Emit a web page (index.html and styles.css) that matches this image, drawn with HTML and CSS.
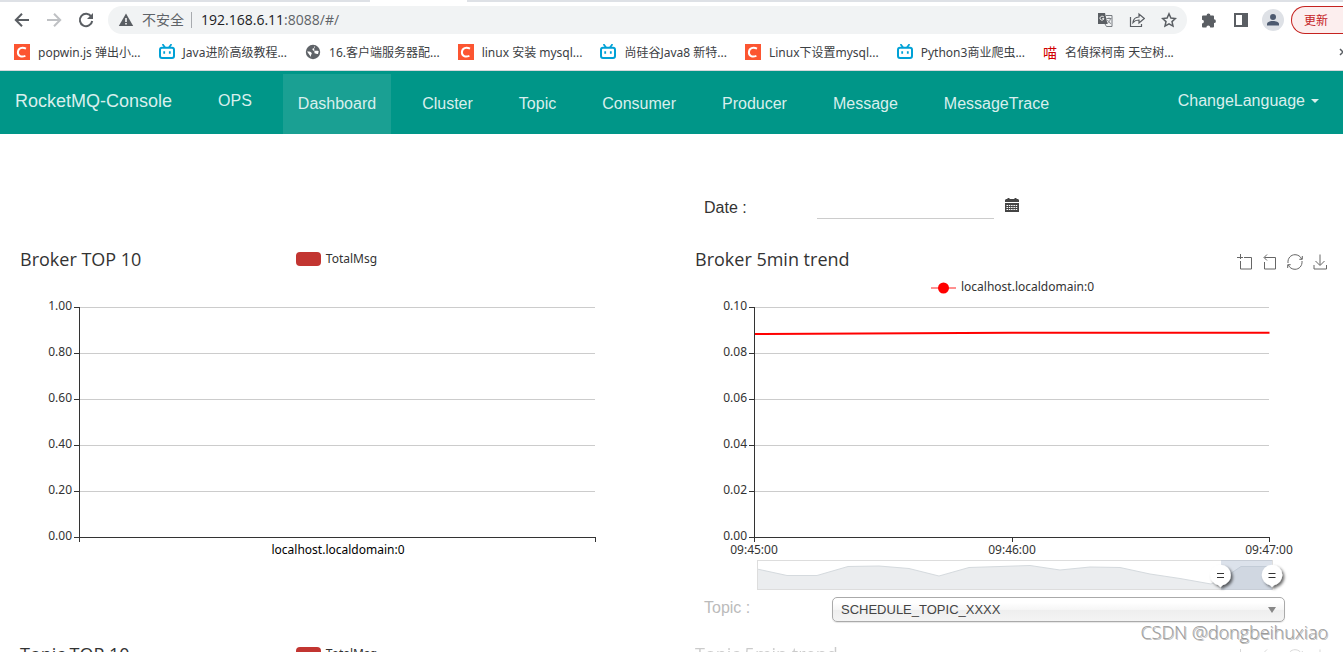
FILE: index.html
```html
<!DOCTYPE html>
<html lang="en">
<head>
<meta charset="utf-8">
<title>RocketMQ-Console</title>
<link rel="stylesheet" href="styles.css">
</head>
<body>
<svg class="defs" width="0" height="0" aria-hidden="true">
  <symbol id="i-csdn" viewBox="0 0 16 16"><rect width="16" height="16" fill="#fc5531"/><path d="M12 4.600C8 2.600 4.200 4 3.900 8.200c0 4 3.400 5.100 7.500 3.700" fill="none" stroke="#fff" stroke-width="2"/></symbol>
  <symbol id="i-tv" viewBox="0 0 16 16"><path d="M4 .8 6 3.500M12 .8 10 3.500" stroke="#00a1d6" stroke-width="1.800" stroke-linecap="round"/><rect x="1" y="3.800" width="14" height="10.200" rx="2" fill="#fff" stroke="#00a1d6" stroke-width="2"/><path d="M5.200 7.200v2.600M10.800 7.200v2.600" stroke="#00a1d6" stroke-width="1.800"/></symbol>
  <symbol id="i-globe" viewBox="0 0 16 16"><circle cx="8" cy="8" r="7.200" fill="#5f6368"/><path d="M9 2.300c1.500.5 1 1.800-.4 2-1.500.3-1.500 1.500-.5 2.200 1.400.8 3.600-.5 5.600.7L13 10c-1.500 0-2-.8-3.500-.8M2 7.500c2-.3 3.800.2 4.500 1.300.7 1-.2 1.700-.5 2.400-.3.800-.2 1.500.3 2.200z" fill="#fff"/></symbol>
  <symbol id="i-zoom" viewBox="0 0 16 16"><path d="M0 3.500h6M3.500 0v5M7 3.500h7.500V15h-11V7" fill="none" stroke="#666"/></symbol>
  <symbol id="i-back" viewBox="0 0 16 16"><path d="M2.500 8v7h11V3.500H2.500M5 .5l-3 3 3 3" fill="none" stroke="#666"/></symbol>
  <symbol id="i-refresh" viewBox="0 0 16 16"><path d="M1 9C.5 4 4 .7 8 .7c3 0 5.500 1.600 6.600 4.300M15 7c.5 5-3 8.300-7 8.300-3 0-5.500-1.600-6.600-4.300M15.300 2v3.300h-3M.7 14v-3.300h3" fill="none" stroke="#666"/></symbol>
  <symbol id="i-save" viewBox="0 0 16 16"><path d="M8 .5v10.500M3.500 7 8 11.500l4.500-4.500M2 11v4h12.500v-4" fill="none" stroke="#666"/></symbol>
</svg>

<div class="browser">
  <div class="tabstrip"><span class="tab-edge"></span></div>
  <div class="toolbar">
    <button class="tool" aria-label="Back"><svg width="16" height="16" viewBox="0 0 16 16"><path d="M15 8H2M8 1.800 1.800 8 8 14.200" fill="none" stroke="#5a5e63" stroke-width="2"/></svg></button>
    <button class="tool" aria-label="Forward"><svg width="16" height="16" viewBox="0 0 16 16"><path d="M1 8h13M8 1.800 14.200 8 8 14.200" fill="none" stroke="#bfc1c4" stroke-width="2"/></svg></button>
    <button class="tool" aria-label="Reload"><svg width="16" height="16" viewBox="0 0 16 16"><path d="M13.300 4.600A6.200 6.200 0 1 0 14.200 9" fill="none" stroke="#5a5e63" stroke-width="2"/><path d="M15 1v6H9z" fill="#5a5e63"/></svg></button>
    <div class="omnibox">
      <svg width="16" height="16" viewBox="0 0 16 16"><path d="M8 1.500 15.200 14H.8z" fill="#5a5e63"/><path d="M8 6v4M8 11v1.600" stroke="#fff" stroke-width="1.500"/></svg>
      <span class="insecure">不安全</span>
      <span class="address">192.168.6.11<span class="path">:8088/#/</span></span>
      <button class="tool" aria-label="Translate"><svg width="16" height="16" viewBox="0 0 16 16"><path d="M1 1h7l2.500 11H1z" fill="#5a5e63"/><path d="M9 3.500h6v11H9.500L8 12" fill="none" stroke="#777b80"/><path d="M7 5.200C5.500 3.500 3 4.300 3 6.300s3 2.700 4 .4H5.200" fill="none" stroke="#fff"/><path d="M9.500 6.500h5M12 5.500v1M13.500 6.500c-.5 2.500-2 4-3.500 5M10.500 8c1 2 2 3 3.500 3.500" fill="none" stroke="#777b80" stroke-width=".9"/></svg></button>
      <button class="tool" aria-label="Share"><svg width="16" height="16" viewBox="0 0 16 16"><path d="M1.500 5v9.500h11V12" fill="none" stroke="#5a5e63" stroke-width="1.200"/><path d="M4 10.500c.3-3.500 2.200-5.300 6-5.500V2l5.300 4.500L10 11V8C7.500 8 5.500 8.700 4 10.500z" fill="none" stroke="#5a5e63" stroke-width="1.200"/></svg></button>
      <button class="tool" aria-label="Bookmark"><svg width="16" height="16" viewBox="0 0 16 16"><path d="m8 1.800 1.900 4.200 4.500.5-3.400 3.100 1 4.500L8 11.800l-4 2.300 1-4.500L1.600 6.500 6.100 6z" fill="none" stroke="#5a5e63" stroke-width="1.500"/></svg></button>
    </div>
    <button class="tool" aria-label="Extensions"><svg width="16" height="16" viewBox="0 0 16 16"><path d="M2 3.500h3.600a1.900 1.900 0 1 1 3.800 0H12a1 1 0 0 1 1 1v2.800a1.900 1.900 0 1 1 0 3.800v3.400a1 1 0 0 1-1 1H9.200a1.900 1.900 0 0 0-3.800 0H2a1 1 0 0 1-1-1v-3a1.900 1.900 0 0 0 0-3.800V4.500a1 1 0 0 1 1-1z" fill="#5a5e63"/></svg></button>
    <button class="tool" aria-label="Side panel"><svg width="16" height="16" viewBox="0 0 16 16"><path d="M1 1h14v14H1zM3 3v10h6V3z" fill="#5a5e63" fill-rule="evenodd"/></svg></button>
    <button class="avatar" aria-label="Profile"><svg width="14" height="14" viewBox="0 0 14 14"><circle cx="7" cy="4" r="3" fill="#4d5a70"/><path d="M1 12.500V11c0-2 3-3 6-3s6 1 6 3v1.500z" fill="#4d5a70"/></svg></button>
    <button class="update">更新</button>
  </div>
  <nav class="bookmarks" aria-label="Bookmarks">
    <a href="#"><svg><use href="#i-csdn"/></svg>popwin.js 弹出小...</a>
    <a href="#"><svg><use href="#i-tv"/></svg>Java进阶高级教程...</a>
    <a href="#"><svg><use href="#i-globe"/></svg>16.客户端服务器配...</a>
    <a href="#"><svg><use href="#i-csdn"/></svg>linux 安装 mysql...</a>
    <a href="#"><svg><use href="#i-tv"/></svg>尚硅谷Java8 新特...</a>
    <a href="#"><svg><use href="#i-csdn"/></svg>Linux下设置mysql...</a>
    <a href="#"><svg><use href="#i-tv"/></svg>Python3商业爬虫...</a>
    <a href="#"><span class="meow">喵</span>名偵探柯南 天空树...</a>
    <button class="more" aria-label="More bookmarks"><svg width="8" height="8" viewBox="0 0 8 8"><path d="m1 1 3 3-3 3" fill="none" stroke="#5a5e63" stroke-width="1.500"/></svg></button>
  </nav>
</div>

<header class="navbar">
  <a class="brand" href="#">RocketMQ-Console</a>
  <a class="ops" href="#">OPS</a>
  <nav class="menu">
    <a class="active" href="#">Dashboard</a>
    <a href="#">Cluster</a>
    <a href="#">Topic</a>
    <a href="#">Consumer</a>
    <a href="#">Producer</a>
    <a href="#">Message</a>
    <a href="#">MessageTrace</a>
  </nav>
  <button class="language">ChangeLanguage<span class="caret"></span></button>
</header>

<main class="page">
  <div class="columns">
    <form class="field date">
      <label for="date">Date :</label>
      <input id="date" type="text">
      <button type="button" aria-label="Open calendar"><svg width="14" height="14" viewBox="0 0 14 14"><path d="M1 1h1.500V0h2v1h5V0h2v1H13l1 1v2H0V2zM0 5h14v9H0z" fill="#444"/><path d="M1.500 7.500h11M1.500 9.500h11M1.500 11.500h11" stroke="#fff" stroke-dasharray="1.500 .8"/></svg></button>
    </form>
  </div>

  <div class="columns charts">
    <section>
      <div class="chart-head">
        <h2>Broker TOP 10</h2>
        <div class="legend"><span class="swatch"></span>TotalMsg</div>
      </div>
      <svg class="plot bar" viewBox="0 0 645 300">
        <path class="grid" d="M65 12.500h515M65 58.500h515M65 104.500h515M65 150.500h515M65 196.500h515"/>
        <path class="axis" d="M64.500 12v235M59 12.500h6M59 58.500h6M59 104.500h6M59 150.500h6M59 196.500h6M59 242.500h522M580.500 242v5"/>
        <g class="ylabels">
          <text x="57" y="15">1.00</text><text x="57" y="61">0.80</text><text x="57" y="107">0.60</text><text x="57" y="153">0.40</text><text x="57" y="199">0.20</text><text x="57" y="245">0.00</text>
        </g>
        <g class="xlabels dark"><text x="323" y="259">localhost.localdomain:0</text></g>
      </svg>
    </section>

    <section>
      <div class="chart-head">
        <h2>Broker 5min trend</h2>
        <div class="toolbox">
          <button aria-label="Zoom"><svg><use href="#i-zoom"/></svg></button>
          <button aria-label="Zoom reset"><svg><use href="#i-back"/></svg></button>
          <button aria-label="Restore"><svg><use href="#i-refresh"/></svg></button>
          <button aria-label="Save image"><svg><use href="#i-save"/></svg></button>
        </div>
      </div>
      <div class="legend below"><svg width="25" height="14" viewBox="0 0 25 14"><path d="M0 8h25" stroke="#ff6b6b" stroke-width="1.500"/><circle cx="12.500" cy="8" r="5.500" fill="red"/></svg>localhost.localdomain:0</div>
      <svg class="plot" viewBox="0 0 645 300">
        <defs>
          <filter id="shade" x="-50%" y="-50%" width="200%" height="200%"><feDropShadow dx="2" dy="2" stdDeviation="1.500" flood-color="#000" flood-opacity=".6"/></filter>
        </defs>
        <path class="grid" d="M65 12.500h514M65 58.500h514M65 104.500h514M65 150.500h514M65 196.500h514"/>
        <path class="axis" d="M64.500 12v235M59 12.500h6M59 58.500h6M59 104.500h6M59 150.500h6M59 196.500h6M59 242.500h521M322.500 242v5M579.500 242v5"/>
        <path class="series" d="M65 39 322 37.700H579.500"/>
        <g class="ylabels">
          <text x="57" y="15">0.10</text><text x="57" y="61">0.08</text><text x="57" y="107">0.06</text><text x="57" y="153">0.04</text><text x="57" y="199">0.02</text><text x="57" y="245">0.00</text>
        </g>
        <g class="xlabels"><text x="64" y="259">09:45:00</text><text x="322" y="259">09:46:00</text><text x="579" y="259">09:47:00</text></g>
        <path d="M67 274 97 280.500h30L158 271.500 189 271 219 273.500 249 281 279 272.500 310 271.500 340 270.500 370 275 400 272 430 272.500 460 279 490 283.500 521 289 534 283 551 271.500H582V294H67z" fill="#ebedef"/>
        <path d="M67 274 97 280.500h30L158 271.500 189 271 219 273.500 249 281 279 272.500 310 271.500 340 270.500 370 275 400 272 430 272.500 460 279 490 283.500 521 289 534 283 551 271.500H582" fill="none" stroke="#d5dade"/>
        <rect x="67.500" y="265.500" width="515" height="29" fill="none" stroke="#ddd"/>
        <rect x="531" y="265" width="51" height="30" fill="#a7b7cc" fill-opacity=".4"/>
        <g filter="url(#shade)" fill="#fff"><path d="M520.200 280a10.300 10.300 0 1 1 20.600 0a10.300 10.300 0 0 1-8.300 10.200l-2 2-2-2a10.300 10.300 0 0 1-8.300-10.200z"/><path d="M571.700 280a10.300 10.300 0 1 1 20.600 0a10.300 10.300 0 0 1-8.300 10.200l-2 2-2-2a10.300 10.300 0 0 1-8.300-10.200z"/></g>
        <path d="M527 278.500h7M527 282.500h7M578.500 278.500h7M578.500 282.500h7" stroke="#333"/>
      </svg>
      <form class="field topic">
        <label for="topic">Topic :</label>
        <span class="select"><select id="topic"><option>SCHEDULE_TOPIC_XXXX</option></select></span>
      </form>
    </section>

    <section>
      <div class="chart-head">
        <h2>Topic TOP 10</h2>
        <div class="legend"><span class="swatch"></span>TotalMsg</div>
      </div>
    </section>
    <section class="loading">
      <div class="chart-head">
        <h2>Topic 5min trend</h2>
        <div class="toolbox">
          <button aria-label="Zoom"><svg><use href="#i-zoom"/></svg></button>
          <button aria-label="Zoom reset"><svg><use href="#i-back"/></svg></button>
          <button aria-label="Restore"><svg><use href="#i-refresh"/></svg></button>
          <button aria-label="Save image"><svg><use href="#i-save"/></svg></button>
        </div>
      </div>
    </section>
  </div>
</main>
<div class="watermark">CSDN @dongbeihuxiao</div>
</body>
</html>
```

FILE: styles.css
```css
* { box-sizing: border-box; }
body {
  margin: 0;
  height: 100vh;
  display: flex;
  flex-direction: column;
  overflow: hidden;
  position: relative;
  background: #fff;
  color: #333;
  font-family: "Liberation Sans", Arial, sans-serif;
}
.defs { position: absolute; }
svg { display: block; flex: none; }
a { text-decoration: none; color: inherit; }
button { border: 0; padding: 0; background: none; font: inherit; color: inherit; flex: none; }

/* Browser chrome */
.browser {
  flex: none;
  overflow: hidden;
  border-bottom: 1px solid #d5d8dc;
  font-family: "Open Sans", "Noto Sans CJK SC", sans-serif;
}
.tabstrip { height: 2px; background: #dee1e6; padding-left: 370px; }
.tab-edge { display: block; width: 97px; height: 2px; background: #fff; }
.toolbar {
  display: flex;
  align-items: center;
  height: 36px;
  padding-left: 14px;
  gap: 16px;
}
.tool { display: block; }
.omnibox {
  flex: 1;
  display: flex;
  align-items: center;
  height: 28px;
  margin: 0 -2px;
  padding: 0 10px;
  border-radius: 14px;
  background: #f1f3f4;
  font-size: 14px;
  line-height: 20px;
}
.insecure { margin-left: 8px; padding-right: 7px; border-right: 1px solid #a8abaf; line-height: 16px; color: #5f6368; }
.address { flex: 1; margin-left: 9px; color: #202124; }
.path { color: #5f6368; }
.omnibox .tool + .tool { margin-left: 16px; }
.avatar {
  width: 22px;
  height: 22px;
  margin-left: -3px;
  display: grid;
  place-items: center;
  border-radius: 50%;
  background: #dee1e6;
}
.update {
  width: 60px;
  height: 28px;
  margin: 0 -8px 0 -9px;
  padding-left: 12px;
  border: 1px solid #c5221f;
  border-right: 0;
  border-radius: 14px 0 0 14px;
  background: #fceeee;
  color: #c5221f;
  font-size: 12px;
  text-align: left;
}
.bookmarks {
  display: flex;
  align-items: center;
  height: 32px;
  padding: 0 0 4px 14px;
  gap: 18px;
  font-family: "Noto Sans", "Noto Sans CJK SC", sans-serif;
  font-size: 12px;
  color: #3c4043;
  white-space: nowrap;
}
.bookmarks a { display: flex; align-items: center; gap: 8px; }
.bookmarks a svg { width: 16px; height: 16px; }
.meow { width: 14px; font-size: 14px; color: #d00000; }
.more { margin: 0 -4px 0 auto; }

/* Site navigation */
.navbar {
  flex: none;
  display: flex;
  align-items: flex-start;
  height: 63px;
  padding: 0 9px 0 0;
  background: #009688;
  color: #d9efed;
  font-size: 16px;
  line-height: 20px;
}
.navbar a, .language { padding: 20px 15px; }
.navbar .brand { font-size: 18px; }
.ops { margin-left: 16px; }
.menu { display: flex; gap: 16px; margin: 3px 0 0 16px; }
.menu .active { background: #1aa093; }
.language { display: flex; align-items: center; gap: 6px; margin-left: auto; }
.caret { border: 4px solid transparent; border-top-color: currentColor; border-bottom: 0; }

/* Dashboard */
.page { flex: 1; min-height: 0; overflow: hidden; padding: 62px 8px 0 15px; }
.columns { display: grid; grid-template-columns: 1fr 1fr; column-gap: 30px; }
.field { display: flex; align-items: center; padding-left: 14px; font-size: 16px; line-height: 22px; }
.date { grid-column: 2; }
.date label { width: 113px; }
.date input {
  width: 177px;
  height: 23px;
  margin-right: 11px;
  padding: 0;
  border: 0;
  border-bottom: 1px solid #ccc;
  font: inherit;
}
.date button { padding-bottom: 6px; }
.charts { margin-top: 28px; row-gap: 20px; }
.chart-head {
  display: grid;
  grid-template-columns: 1fr auto 1fr;
  align-items: center;
  height: 24px;
  padding: 0 7px 0 5px;
}
h2 { margin: 0; font: 18px/24px "Open Sans", sans-serif; color: #333; white-space: nowrap; }
.legend {
  display: flex;
  align-items: center;
  gap: 5px;
  height: 22px;
  font: 12px/16px "Noto Sans", sans-serif;
}
.legend.below { justify-content: center; height: 16px; margin-top: 8px; }
.swatch { width: 25px; height: 14px; border-radius: 4px; background: #c23531; }
.toolbox { grid-column: 3; justify-self: end; display: flex; gap: 9px; padding-top: 5px; }
.toolbox svg { width: 16px; height: 16px; }
.plot { width: 100%; height: auto; font: 12px "Noto Sans", sans-serif; fill: #333; }
.plot.bar { margin-top: 24px; }
.grid { fill: none; stroke: #ccc; }
.axis { fill: none; stroke: #333; }
.series { fill: none; stroke: red; stroke-width: 2; }
.ylabels { text-anchor: end; }
.xlabels { text-anchor: middle; }
.xlabels.dark { fill: #000; }
.topic { margin-top: 2px; padding-right: 50px; }
.topic label { width: 128px; padding-bottom: 3px; color: #bbb; }
.select { flex: 1; position: relative; display: block; height: 25px; }
.select::after {
  content: "";
  position: absolute;
  top: 10px;
  right: 9px;
  border: 4px solid transparent;
  border-top: 6px solid #888;
  border-bottom: 0;
}
.select select {
  display: block;
  appearance: none;
  width: 100%;
  height: 25px;
  padding: 0 8px;
  border: 1px solid #aaa;
  border-radius: 5px;
  background: linear-gradient(#fff 20%, #f6f6f6 50%, #eee 52%, #f4f4f4 100%);
  box-shadow: 0 1px 1px rgba(0, 0, 0, .1);
  color: #444;
  font: 13px "Liberation Sans", Arial, sans-serif;
}
.loading { opacity: .25; }
.watermark {
  position: absolute;
  right: 15px;
  bottom: 9px;
  color: #999;
  font: 300 18px/22px "Open Sans", sans-serif;
  text-shadow: 1px 1px 0 #bbb;
}
```
